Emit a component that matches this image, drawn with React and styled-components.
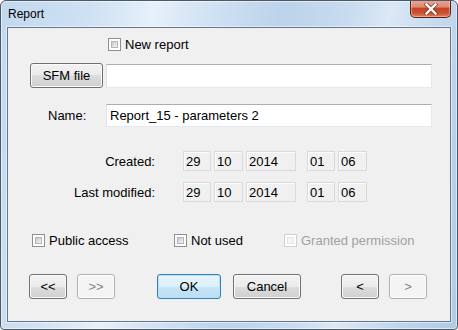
import React from "react";
import styled, { createGlobalStyle } from "styled-components";

const GlobalStyle = createGlobalStyle`
  html, body {
    margin: 0;
    padding: 0;
    background: #ffffff;
  }
  body {
    font-family: "Liberation Sans", Arial, sans-serif;
    font-size: 13px;
    color: #000;
  }
`;

const Window = styled.div`
  width: 458px;
  height: 330px;
  box-sizing: border-box;
  display: flex;
  flex-direction: column;
  border: 1px solid #4b5866;
  border-radius: 6px 6px 4px 4px;
  box-shadow: inset 0 0 0 1px rgba(255, 255, 255, 0.55);
  background: linear-gradient(
    100deg,
    #c2d8ee 0%,
    #cfe1f3 18%,
    #e6f0fa 30%,
    #d2e3f4 40%,
    #bcd3eb 55%,
    #c8dbef 68%,
    #dbe8f6 76%,
    #c0d6ed 88%,
    #aecbe7 100%
  );
  overflow: hidden;
`;

const TitleBar = styled.div`
  height: 26px;
  display: flex;
  justify-content: space-between;
  align-items: flex-start;
  padding-left: 7px;
`;

const Title = styled.span`
  font-size: 12px;
  line-height: 26px;
  color: #000;
`;

const CloseButton = styled.div`
  width: 41px;
  height: 18px;
  margin: -1px 6px 0 0;
  box-sizing: border-box;
  border: 1px solid #5b1e12;
  border-top: none;
  border-radius: 0 0 5px 5px;
  background: linear-gradient(
    180deg,
    #e9a999 0%,
    #dd8a74 40%,
    #c4432a 50%,
    #c9502f 75%,
    #e0805e 100%
  );
  box-shadow: inset 0 0 0 1px rgba(255, 220, 210, 0.45);
  display: flex;
  align-items: center;
  justify-content: center;
`;

const Client = styled.div`
  flex: 1;
  margin: 0 6px 7px 6px;
  background: #f0f0f0;
  border: 1px solid #65768a;
  box-shadow: 0 0 0 1px rgba(255, 255, 255, 0.5);
  display: flex;
  flex-direction: column;
`;

const Row = styled.div`
  display: flex;
  align-items: center;
  height: ${(p) => p.$h}px;
  margin-top: ${(p) => p.$mt}px;
  padding-left: ${(p) => p.$pl || 0}px;
`;

const Label = styled.span`
  width: ${(p) => p.$w}px;
  text-align: ${(p) => p.$align || "left"};
  margin-right: ${(p) => p.$mr || 0}px;
  flex-shrink: 0;
  white-space: nowrap;
`;

const TextInput = styled.div`
  width: ${(p) => p.$w}px;
  height: ${(p) => p.$h}px;
  box-sizing: border-box;
  background: #ffffff;
  border: 1px solid #abadb3;
  border-color: #abadb3 #e3e9ef #e3e9ef #e2e3ea;
  padding-left: 3px;
  display: flex;
  align-items: center;
  white-space: nowrap;
`;

const Field = styled.div`
  width: ${(p) => p.$w}px;
  height: 20px;
  box-sizing: border-box;
  background: #f0f0f0;
  border: 1px solid #d9d9d9;
  box-shadow: inset 1px 1px 0 #fcfcfc;
  padding-left: 2px;
  margin-left: ${(p) => p.$ml || 0}px;
  display: flex;
  align-items: center;
`;

const FieldGroup = styled.div`
  display: flex;
  gap: 3px;
`;

const Check = styled.label`
  display: flex;
  align-items: center;
  gap: 4px;
  width: ${(p) => (p.$w ? `${p.$w}px` : "auto")};
  color: ${(p) => (p.$disabled ? "#a0a0a0" : "#000")};
  white-space: nowrap;
`;

const Box = styled.span`
  width: 13px;
  height: 13px;
  box-sizing: border-box;
  border: 1px solid ${(p) => (p.$disabled ? "#cfd0d1" : "#8e8f8f")};
  background: #fff;
  padding: 2px;
  display: inline-flex;
  flex-shrink: 0;
  &::after {
    content: "";
    flex: 1;
    background: ${(p) =>
      p.$disabled
        ? "#f4f4f4"
        : "linear-gradient(135deg, #c3c6cb 0%, #dcdee1 50%, #f4f4f4 100%)"};
    border: 1px solid ${(p) => (p.$disabled ? "#e6e6e6" : "#b4b6ba")};
  }
`;

const Button = styled.button`
  width: ${(p) => p.$w}px;
  height: 25px;
  margin-left: ${(p) => p.$ml || 0}px;
  box-sizing: border-box;
  padding: 0;
  font-family: "Liberation Sans", Arial, sans-serif;
  font-size: 13px;
  border-radius: 3px;
  flex-shrink: 0;
  border: 1px solid ${(p) =>
    p.$disabled ? "#adb2b5" : p.$focus ? "#3c7fb1" : "#707070"};
  color: ${(p) => (p.$disabled ? "#838383" : "#000")};
  box-shadow: inset 0 0 0 1px
    ${(p) => (p.$disabled ? "#fcfcfc" : p.$focus ? "#b6e2f8" : "#fbfbfb")};
  background: ${(p) =>
    p.$disabled
      ? "#f4f4f4"
      : p.$focus
      ? "linear-gradient(180deg, #e6f4fc 0%, #dcf0fb 50%, #c8e7f8 50%, #b9ddf2 100%)"
      : "linear-gradient(180deg, #f2f2f2 0%, #ebebeb 50%, #dddddd 50%, #cfcfcf 100%)"};
`;

export default function App() {
  return (
    <>
      <GlobalStyle />
      <Window>
        <TitleBar>
          <Title>Report</Title>
          <CloseButton>
            <svg width="16" height="12" viewBox="0 0 16 12">
              <path
                d="M3.5 1.5 L12.5 10.5 M12.5 1.5 L3.5 10.5"
                stroke="#6b2314"
                strokeWidth="4.2"
                strokeLinecap="square"
                opacity="0.6"
              />
              <path
                d="M3.5 1.5 L12.5 10.5 M12.5 1.5 L3.5 10.5"
                stroke="#ffffff"
                strokeWidth="2.4"
                strokeLinecap="square"
              />
            </svg>
          </CloseButton>
        </TitleBar>
        <Client>
          <Row $mt={8} $h={16} $pl={100}>
            <Check>
              <Box />
              New report
            </Check>
          </Row>
          <Row $mt={11} $h={25} $pl={22}>
            <Button $w={73}>SFM file</Button>
            <TextInput $w={326} $h={24} style={{ marginLeft: 3 }} />
          </Row>
          <Row $mt={16} $h={23} $pl={40}>
            <Label $w={58}>Name:</Label>
            <TextInput $w={326} $h={23}>
              Report_15 - parameters 2
            </TextInput>
          </Row>
          <Row $mt={24} $h={20}>
            <Label $w={147} $align="right" $mr={28}>
              Created:
            </Label>
            <FieldGroup>
              <Field $w={28}>29</Field>
              <Field $w={29}>10</Field>
              <Field $w={50}>2014</Field>
              <Field $w={28} $ml={8}>01</Field>
              <Field $w={29}>06</Field>
            </FieldGroup>
          </Row>
          <Row $mt={11} $h={20}>
            <Label $w={147} $align="right" $mr={28}>
              Last modified:
            </Label>
            <FieldGroup>
              <Field $w={28}>29</Field>
              <Field $w={29}>10</Field>
              <Field $w={50}>2014</Field>
              <Field $w={28} $ml={8}>01</Field>
              <Field $w={29}>06</Field>
            </FieldGroup>
          </Row>
          <Row $mt={30} $h={16} $pl={24}>
            <Check $w={142}>
              <Box />
              Public access
            </Check>
            <Check $w={110}>
              <Box />
              Not used
            </Check>
            <Check $disabled>
              <Box $disabled />
              Granted permission
            </Check>
          </Row>
          <Row $mt={26} $h={25} $pl={21}>
            <Button $w={38}>&lt;&lt;</Button>
            <Button $w={38} $ml={10} $disabled>
              &gt;&gt;
            </Button>
            <Button $w={64} $ml={42} $focus>
              OK
            </Button>
            <Button $w={68} $ml={12}>
              Cancel
            </Button>
            <Button $w={38} $ml={40}>
              &lt;
            </Button>
            <Button $w={38} $ml={10} $disabled>
              &gt;
            </Button>
          </Row>
        </Client>
      </Window>
    </>
  );
}
